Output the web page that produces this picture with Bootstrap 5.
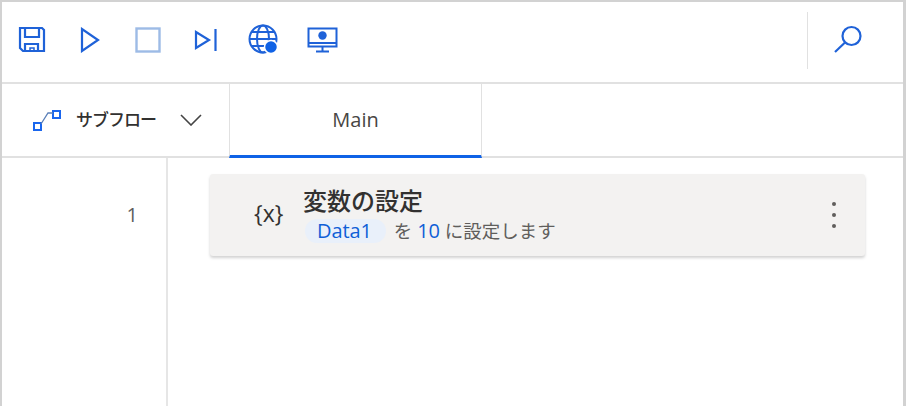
<!DOCTYPE html>
<html lang="ja">
<head>
    <meta charset="UTF-8">
    <title>フローデザイナー</title>
    <link href="https://cdn.jsdelivr.net/npm/bootstrap@5.3.0/dist/css/bootstrap.min.css" rel="stylesheet">
    <style>
        html, body { height: 100%; }
        body {
            font-family: "Open Sans", "Noto Sans CJK JP", sans-serif;
            color: #323130;
            background: #fff;
            overflow: hidden;
        }
        .app-frame {
            height: 406px;
            border: 2px solid #d2d2d2;
            border-right-width: 3px;
            border-bottom: 0;
        }
        .tool-bar { height: 82px; border-bottom: 2px solid #e1e1e1; padding-left: 14px; padding-bottom: 4px; }
        .tool-btn { width: 32px; height: 32px; margin-right: 26px; }
        .tool-btn svg { display: block; }
        .search-box { width: 96px; height: 57px; border-left: 1px solid #e1e1e1; padding-left: 24px; }
        .tab-bar { height: 74px; border-bottom: 2px solid #e1e1e1; }
        .subflow-tab { width: 227px; padding-left: 30px; }
        .subflow-label { font-size: 17px; font-weight: 500; margin-left: 14px; margin-right: 24px; letter-spacing: -1px; white-space: nowrap; }
        .main-tab {
            width: 253px;
            height: 74px;
            border-left: 1px solid #e1e1e1;
            border-right: 1px solid #e1e1e1;
            border-bottom: 3px solid #0f62e6;
            font-size: 20px;
            color: #484644;
            margin-bottom: -2px;
        }
        .line-gutter {
            width: 166px;
            border-right: 2px solid #e6e6e6;
            padding-top: 42px;
            padding-right: 28px;
            font-size: 20px;
            color: #605e5c;
            text-align: right;
        }
        .flow-pane { padding: 16px 38px 0 42px; }
        .action-card {
            height: 82px;
            background: #f3f2f1;
            border-radius: 3px;
            box-shadow: 0 2px 3px rgba(0, 0, 0, .18);
        }
        .action-icon { width: 93px; padding-left: 44px; font-size: 23px; white-space: nowrap; margin-top: -3px; }
        .action-title { font-size: 24px; font-weight: 500; line-height: 28px; margin-top: -1px; }
        .action-desc { font-size: 18.5px; line-height: 24px; color: #605e5c; margin-top: 4px; white-space: nowrap; }
        .var-chip { font-size: 20px; background: #e9f0fa; color: #0f5fd7; border-radius: 12px; padding: 0 14px 0 12px; margin-left: 2px; margin-right: 8px; display: inline-block; line-height: 24px; letter-spacing: -0.1px; }
        .var-value { font-size: 20px; color: #0f5fd7; }
        .more-dots { width: 4px; margin-right: 29px; }
        .more-dots i { display: block; width: 4px; height: 4px; border-radius: 50%; background: #605e5c; margin: 7px 0; }
    </style>
</head>
<body>
    <div class="app-frame d-flex flex-column">
        <!-- toolbar -->
        <div class="tool-bar d-flex align-items-center flex-shrink-0">
            <div class="tool-btn d-flex align-items-center justify-content-center">
                <svg width="28" height="28" viewBox="0 0 28 28" fill="none" stroke="#1f62d8" stroke-width="2.2"><path d="M2 2h22l2 2v21H5l-3-3z"/><path d="M7 3v8h14V3"/><path d="M7 25v-7h13v7"/><path d="M12 25v-3h4v3" stroke-width="1.5"/></svg>
            </div>
            <div class="tool-btn d-flex align-items-center justify-content-center">
                <svg width="20" height="26" viewBox="0 0 20 26" fill="none" stroke="#1f62d8" stroke-width="2.2"><path d="M2 2v22l16-11z"/></svg>
            </div>
            <div class="tool-btn d-flex align-items-center justify-content-center">
                <svg width="26" height="26" viewBox="0 0 26 26" fill="none" stroke="#9dbbe6" stroke-width="2.4"><rect x="1.500" y="1.500" width="23" height="23"/></svg>
            </div>
            <div class="tool-btn d-flex align-items-center justify-content-center">
                <svg width="24" height="24" viewBox="0 0 24 24" fill="none" stroke="#1f62d8" stroke-width="2.2"><path d="M2 4v16l13-8z"/><path d="M21.500 1v22"/></svg>
            </div>
            <div class="tool-btn d-flex align-items-center justify-content-center">
                <svg width="32" height="32" viewBox="0 0 32 32" fill="none" stroke="#1f62d8" stroke-width="2"><circle cx="15" cy="15" r="13.500"/><ellipse cx="15" cy="15" rx="6" ry="13.500"/><path d="M2 15h26M4 8h22M4 22h22"/><circle cx="23" cy="23" r="6.500" fill="#0f62e6" stroke="#fff" stroke-width="1.500"/></svg>
            </div>
            <div class="tool-btn d-flex align-items-center justify-content-center">
                <svg width="31" height="26" viewBox="0 0 31 26" fill="none" stroke="#1f62d8" stroke-width="2"><rect x="1.500" y="1.500" width="28" height="18"/><path d="M1.500 16h28" stroke-width="2"/><circle cx="15.500" cy="8.500" r="4.200" fill="#1f62d8" stroke="none"/><path d="M15.500 19v5M9 24.500h13"/></svg>
            </div>
            <div class="search-box ms-auto d-flex align-items-center">
                <svg width="32" height="32" viewBox="0 0 32 32" fill="none" stroke="#1f62d8" stroke-width="2.200"><circle cx="19.500" cy="12" r="9"/><path d="M13 18.500 3 28"/></svg>
            </div>
        </div>
        <!-- tabs -->
        <div class="tab-bar d-flex flex-shrink-0">
            <div class="subflow-tab d-flex align-items-center">
                <svg width="30" height="24" viewBox="0 0 30 24" fill="none" stroke="#1a66ee" stroke-width="2"><rect x="2" y="15" width="7" height="7"/><rect x="21" y="3" width="7" height="7"/><path d="M9 16 16 5h5" stroke="#5a7fb8" stroke-width="1.300"/></svg>
                <span class="subflow-label">サブフロー</span>
                <svg width="22" height="12" viewBox="0 0 22 12" fill="none" stroke="#444" stroke-width="1.600"><path d="M1 1l10 10L21 1"/></svg>
            </div>
            <div class="main-tab d-flex align-items-center justify-content-center">Main</div>
        </div>
        <!-- flow -->
        <div class="d-flex flex-grow-1">
            <div class="line-gutter">1</div>
            <div class="flow-pane flex-grow-1">
                <div class="action-card d-flex align-items-center">
                    <div class="action-icon">{x}</div>
                    <div class="flex-grow-1">
                        <div class="action-title">変数の設定</div>
                        <div class="action-desc"><span class="var-chip">Data1</span>を <span class="var-value">10</span> に設定します</div>
                    </div>
                    <div class="more-dots"><i></i><i></i><i></i></div>
                </div>
            </div>
        </div>
    </div>
    <script src="https://cdn.jsdelivr.net/npm/bootstrap@5.3.0/dist/js/bootstrap.bundle.min.js"></script>
</body>
</html>
